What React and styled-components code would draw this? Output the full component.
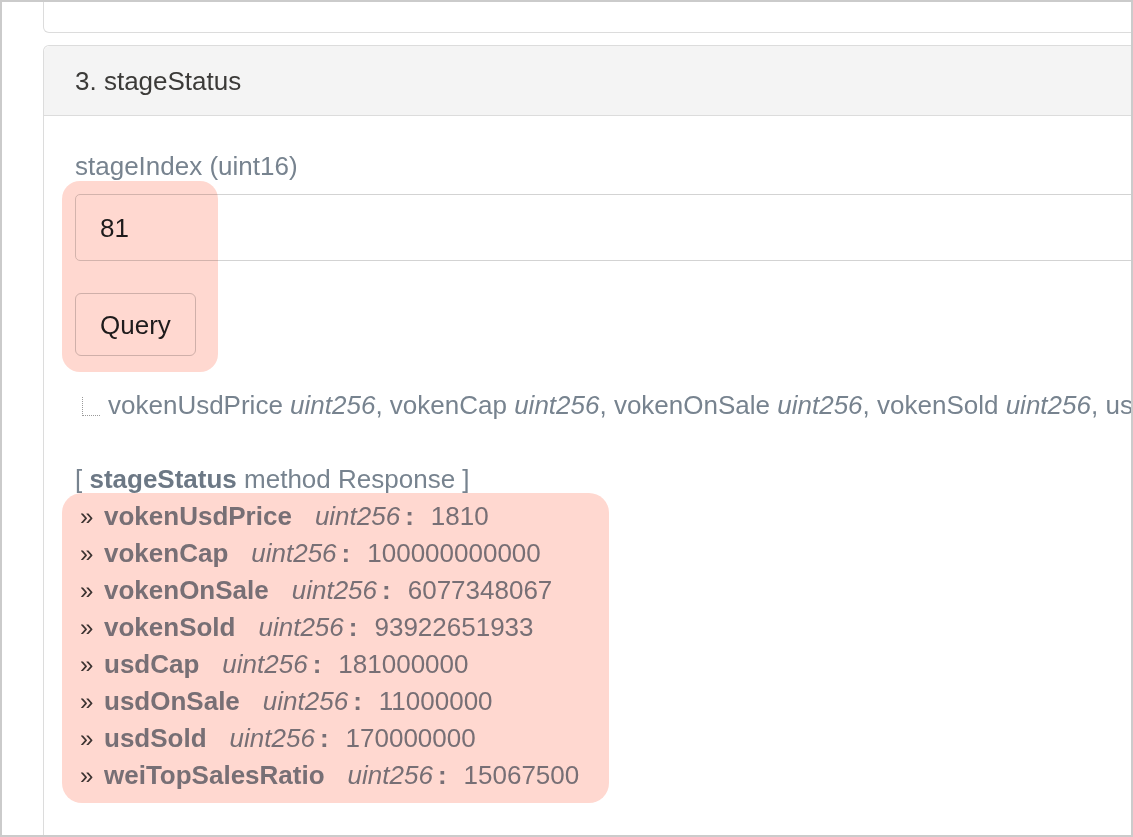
import React from "react";
import styled, { createGlobalStyle } from "styled-components";

const Global = createGlobalStyle`
  html, body { margin: 0; padding: 0; background: #fff; }
  body { font-family: "Liberation Sans", Arial, sans-serif; }
`;

const Frame = styled.div`
  position: relative;
  width: 1133px;
  height: 837px;
  box-sizing: border-box;
  border: 2px solid #cbcbcb;
  overflow: hidden;
  padding-left: 41px;
  display: flex;
  flex-direction: column;
  gap: 12px;
  background: #fff;
`;

const PrevCard = styled.div`
  width: 1160px;
  height: 30px;
  flex: none;
  border: 1px solid #dcdcdc;
  border-top: none;
  border-radius: 0 0 6px 6px;
`;

const Card = styled.div`
  width: 1160px;
  flex: 1;
  border: 1px solid #dcdcdc;
  border-bottom: none;
  border-radius: 6px 6px 0 0;
  display: flex;
  flex-direction: column;
`;

const CardHeader = styled.div`
  height: 70px;
  box-sizing: border-box;
  background: #f4f4f4;
  border-bottom: 1px solid #dcdcdc;
  border-radius: 6px 6px 0 0;
  display: flex;
  align-items: center;
  padding: 2px 31px 0;
  font-size: 26px;
  color: #3b3a38;
`;

const CardBody = styled.div`
  padding: 32px 31px 0 31px;
  font-size: 26px;
  line-height: 37px;
  color: #77838f;
`;

const Label = styled.div`
  margin-bottom: 9px;
`;

const Input = styled.div`
  height: 67px;
  box-sizing: border-box;
  border: 1px solid #d3d3d3;
  border-radius: 5px;
  display: flex;
  align-items: center;
  padding: 2px 24px 0;
  color: #1e2022;
`;

const Button = styled.button`
  margin-top: 32px;
  height: 63px;
  box-sizing: border-box;
  padding: 2px 24px 0;
  border: 1px solid #cfcfcf;
  border-radius: 6px;
  background: #fff;
  font-family: "Liberation Sans", Arial, sans-serif;
  font-size: 26px;
  color: #1e2022;
`;

const Outputs = styled.div`
  margin-top: 31px;
  white-space: nowrap;
  display: flex;
  align-items: flex-end;
`;

const Tree = styled.span`
  display: inline-block;
  width: 17px;
  height: 18px;
  margin: 0 8px 8px 7px;
  border-left: 1px dotted #9a9a9a;
  border-bottom: 1px dotted #9a9a9a;
  flex: none;
`;

const Spacer = styled.div`
  height: 37px;
`;

const ResponseTitle = styled.div`
  b { color: #6c7885; }
`;

const Row = styled.div`
  padding-left: 5px;
  white-space: nowrap;
`;

const Chev = styled.span`
  display: inline-block;
  width: 24px;
  color: #3c3c3c;
  font-size: 24px;
`;

const Name = styled.b`
  color: #77838f;
`;

const Type = styled.i`
  margin-left: 23px;
`;

const Colon = styled.b`
  margin-left: 5px;
`;

const Value = styled.span`
  margin-left: 17px;
`;

const Highlight = styled.div`
  position: absolute;
  left: ${(p) => p.$x}px;
  top: ${(p) => p.$y}px;
  width: ${(p) => p.$w}px;
  height: ${(p) => p.$h}px;
  border-radius: ${(p) => p.$r}px;
  background: #ffd8d0;
  mix-blend-mode: multiply;
  pointer-events: none;
`;

const rows = [
  ["vokenUsdPrice", "1810"],
  ["vokenCap", "100000000000"],
  ["vokenOnSale", "6077348067"],
  ["vokenSold", "93922651933"],
  ["usdCap", "181000000"],
  ["usdOnSale", "11000000"],
  ["usdSold", "170000000"],
  ["weiTopSalesRatio", "15067500"],
];

export default function App() {
  return (
    <>
      <Global />
      <Frame>
        <PrevCard />
        <Card>
          <CardHeader>3. stageStatus</CardHeader>
          <CardBody>
            <Label>stageIndex (uint16)</Label>
            <Input>81</Input>
            <Button>Query</Button>
            <Outputs>
              <Tree />
              <span>
                vokenUsdPrice <i>uint256</i>, vokenCap <i>uint256</i>, vokenOnSale{" "}
                <i>uint256</i>, vokenSold <i>uint256</i>, usdCap <i>uint256</i>, usdOnSale{" "}
                <i>uint256</i>, usdSold <i>uint256</i>, weiTopSalesRatio <i>uint256</i>
              </span>
            </Outputs>
            <Spacer />
            <ResponseTitle>
              [ <b>stageStatus</b> method Response ]
            </ResponseTitle>
            {rows.map(([n, v]) => (
              <Row key={n}>
                <Chev>»</Chev>
                <Name>{n}</Name>
                <Type>uint256</Type>
                <Colon>:</Colon>
                <Value>{v}</Value>
              </Row>
            ))}
          </CardBody>
        </Card>
        <Highlight $x={60} $y={179} $w={156} $h={191} $r={18} />
        <Highlight $x={60} $y={491} $w={547} $h={310} $r={20} />
      </Frame>
    </>
  );
}
